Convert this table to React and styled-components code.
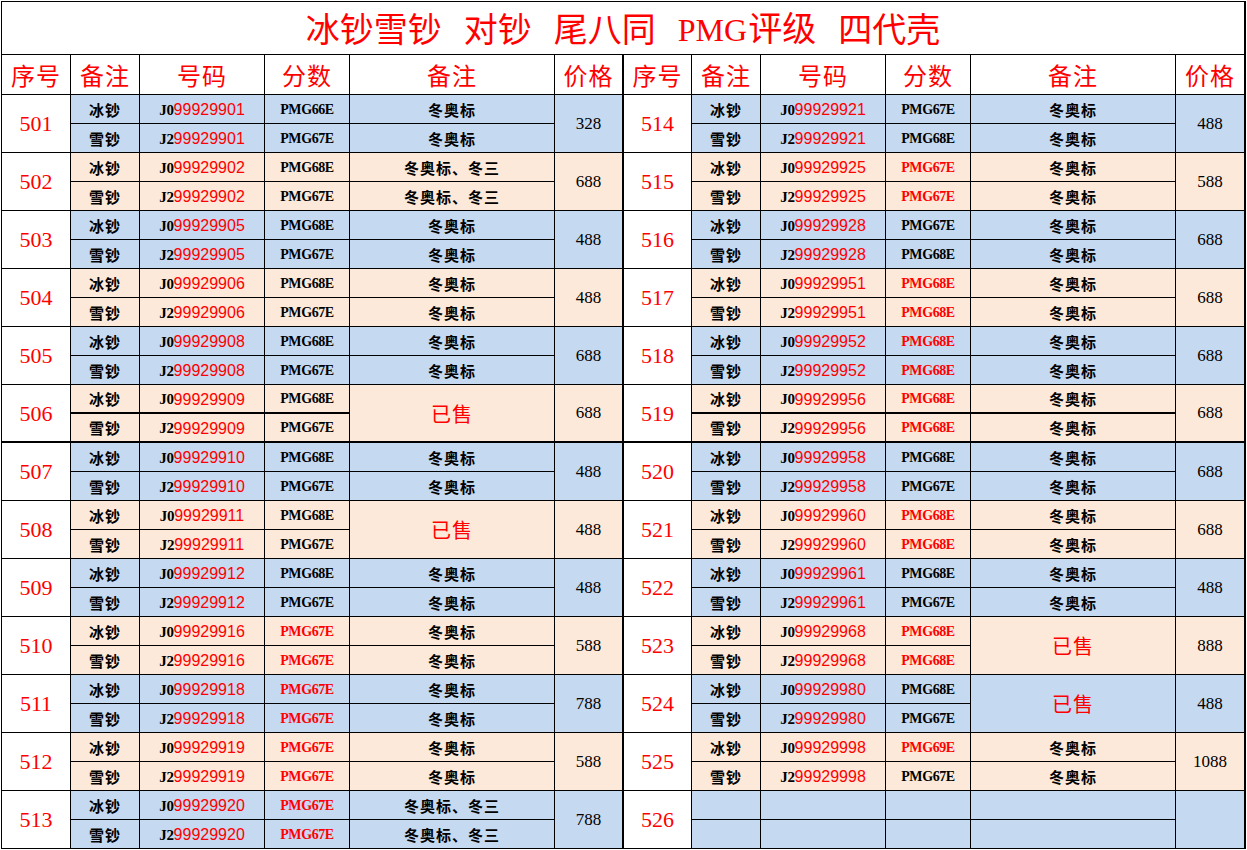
import React from 'react';
import styled, { createGlobalStyle, css } from 'styled-components';

const Global = createGlobalStyle`
  html, body { margin: 0; padding: 0; background: #fff; }
  body { font-family: "Liberation Serif", "Noto Sans CJK SC", serif; }
  * { box-sizing: border-box; }
`;

const BLUE = '#C5D9F1';
const PEACH = '#FDE9D9';
const RED = '#FF0000';
const CJK = '"Noto Sans CJK SC", sans-serif';

const LEFT_COLS = '69px 69px 125px 85px 205px 69px';
const RIGHT_COLS = '68px 69px 125px 85px 205px 70px';

const Sheet = styled.div`
  margin: 1px 0 0 1px;
  width: 1245px;
  border-left: 1px solid #000;
  border-top: 1px solid #000;
`;

const Title = styled.div`
  height: 53px;
  display: flex;
  justify-content: center;
  align-items: center;
  gap: 22px;
  border-right: 2px solid #000;
  border-bottom: 1px solid #000;
  color: ${RED};
  font-family: ${CJK};
  font-size: 34px;
  line-height: 1;
`;

const TitleLatin = styled.span`
  font-family: "Liberation Serif", serif;
  font-size: 32px;
  margin-right: 1px;
`;

const HeaderRow = styled.div`
  display: grid;
  grid-template-columns: ${LEFT_COLS} ${RIGHT_COLS};
  height: 40px;
`;

const HeadCell = styled.div`
  display: flex;
  align-items: center;
  justify-content: center;
  border-right: ${(p) => (p.$edge ? 2 : 1)}px solid #000;
  border-bottom: 1px solid #000;
  color: ${RED};
  font-family: ${CJK};
  font-size: 24px;
  letter-spacing: 1px;
`;

const Body = styled.div`
  display: flex;
`;

const Half = styled.div`
  display: flex;
  flex-direction: column;
`;

const Group = styled.div`
  display: grid;
  grid-template-columns: ${(p) => p.$cols};
  grid-template-rows: 29px 29px;
`;

const Cell = styled.div`
  display: flex;
  align-items: center;
  justify-content: center;
  white-space: nowrap;
  background: ${(p) => p.$bg || '#fff'};
  border-right: ${(p) => (p.$edge ? 2 : 1)}px solid #000;
  border-bottom: ${(p) => (p.$thick ? 2 : 1)}px solid #000;
  ${(p) =>
    p.$span &&
    css`
      grid-row: span 2;
    `}
`;

const SeqCell = styled(Cell)`
  color: ${RED};
  font-size: 22px;
  padding-top: 1px;
`;

const NoteCell = styled(Cell)`
  font-family: ${CJK};
  font-size: 15px;
  font-weight: 700;
  color: #000;
  letter-spacing: 1px;
`;

const NumCell = styled(Cell)`
  font-size: 16px;
  color: #000;
  padding-top: 2px;
`;

const NumPrefix = styled.span`
  font-weight: 700;
  font-size: 15px;
  letter-spacing: -0.3px;
`;

const NumRed = styled.span`
  font-family: "Liberation Sans", sans-serif;
  color: ${RED};
`;

const GradeCell = styled(Cell)`
  font-size: 14px;
  font-weight: 700;
  letter-spacing: -0.4px;
  padding-top: 1px;
  color: ${(p) => (p.$red ? RED : '#000')};
`;

const RemarkCell = styled(Cell)`
  font-family: ${CJK};
  font-size: 15px;
  font-weight: 700;
  color: #000;
  letter-spacing: 1px;
`;

const SoldCell = styled(Cell)`
  font-family: ${CJK};
  font-size: 20px;
  color: ${RED};
  letter-spacing: 1px;
`;

const PriceCell = styled(Cell)`
  font-size: 17px;
  color: #000;
`;

const S = '冬奥标';
const S2 = '冬奥标、冬三';

const g = (seq, code, g1, r1, g2, r2, remark, price, extra = {}) => ({
  seq, code, grades: [[g1, r1], [g2, r2]], remark, price, ...extra,
});

const leftData = [
  g(501, '901', '66', 0, '67', 0, S, 328),
  g(502, '902', '68', 0, '67', 0, S2, 688),
  g(503, '905', '68', 0, '67', 0, S, 488),
  g(504, '906', '68', 0, '67', 0, S, 488),
  g(505, '908', '68', 0, '67', 0, S, 688),
  g(506, '909', '68', 0, '67', 0, 'sold', 688, { thickMid: true, thickBottom: true }),
  g(507, '910', '68', 0, '67', 0, S, 488),
  g(508, '911', '68', 0, '67', 0, 'sold', 488),
  g(509, '912', '68', 0, '67', 0, S, 488),
  g(510, '916', '67', 1, '67', 1, S, 588),
  g(511, '918', '67', 1, '67', 1, S, 788),
  g(512, '919', '67', 1, '67', 1, S, 588),
  g(513, '920', '67', 1, '67', 1, S2, 788),
];

const rightData = [
  g(514, '921', '67', 0, '68', 0, S, 488),
  g(515, '925', '67', 1, '67', 1, S, 588),
  g(516, '928', '67', 0, '68', 0, S, 688),
  g(517, '951', '68', 1, '68', 1, S, 688),
  g(518, '952', '68', 1, '68', 1, S, 688),
  g(519, '956', '68', 1, '68', 1, S, 688, { thickMid: true, thickBottom: true }),
  g(520, '958', '68', 0, '67', 0, S, 688),
  g(521, '960', '68', 1, '68', 1, S, 688),
  g(522, '961', '68', 0, '67', 0, S, 488),
  g(523, '968', '68', 1, '68', 1, 'sold', 888),
  g(524, '980', '68', 0, '67', 0, 'sold', 488),
  g(525, '998', '69', 1, '67', 0, S, 1088),
  { seq: 526, empty: true },
];

const headers = ['序号', '备注', '号码', '分数', '备注', '价格'];

function DataGroup({ item, index, cols }) {
  const bg = index % 2 === 0 ? BLUE : PEACH;
  const tb = !!item.thickBottom;
  const mid = !!item.thickMid;
  const sold = item.remark === 'sold';

  if (item.empty) {
    return (
      <Group $cols={cols}>
        <SeqCell $span>{item.seq}</SeqCell>
        <NoteCell $bg={bg} />
        <NumCell $bg={bg} />
        <GradeCell $bg={bg} />
        <RemarkCell $bg={bg} />
        <PriceCell $bg={bg} $span $edge />
        <NoteCell $bg={bg} />
        <NumCell $bg={bg} />
        <GradeCell $bg={bg} />
        <RemarkCell $bg={bg} />
      </Group>
    );
  }

  const sub = (i) => {
    const last = i === 1;
    const thick = last ? tb : mid;
    const [grade, red] = item.grades[i];
    return (
      <React.Fragment key={i}>
        <NoteCell $bg={bg} $thick={thick}>{i === 0 ? '冰钞' : '雪钞'}</NoteCell>
        <NumCell $bg={bg} $thick={thick}>
          <NumPrefix>{i === 0 ? 'J0' : 'J2'}</NumPrefix>
          <NumRed>99929{item.code}</NumRed>
        </NumCell>
        <GradeCell $bg={bg} $thick={thick} $red={!!red}>PMG{grade}E</GradeCell>
        {sold ? (
          i === 0 && (
            <SoldCell $bg={bg} $span $thick={tb}>已售</SoldCell>
          )
        ) : (
          <RemarkCell $bg={bg} $thick={thick}>{item.remark}</RemarkCell>
        )}
        {i === 0 && (
          <PriceCell $bg={bg} $span $edge $thick={tb}>{item.price}</PriceCell>
        )}
      </React.Fragment>
    );
  };

  return (
    <Group $cols={cols}>
      <SeqCell $span $thick={tb}>{item.seq}</SeqCell>
      {sub(0)}
      {sub(1)}
    </Group>
  );
}

export default function App() {
  return (
    <>
      <Global />
      <Sheet>
        <Title>
          <span>冰钞雪钞</span>
          <span>对钞</span>
          <span>尾八同</span>
          <span>
            <TitleLatin>PMG</TitleLatin>评级
          </span>
          <span>四代壳</span>
        </Title>
        <HeaderRow>
          {[...headers, ...headers].map((h, i) => (
            <HeadCell key={i} $edge={i === 5 || i === 11}>{h}</HeadCell>
          ))}
        </HeaderRow>
        <Body>
          <Half>
            {leftData.map((item, i) => (
              <DataGroup key={item.seq} item={item} index={i} cols={LEFT_COLS} />
            ))}
          </Half>
          <Half>
            {rightData.map((item, i) => (
              <DataGroup key={item.seq} item={item} index={i} cols={RIGHT_COLS} />
            ))}
          </Half>
        </Body>
      </Sheet>
    </>
  );
}
